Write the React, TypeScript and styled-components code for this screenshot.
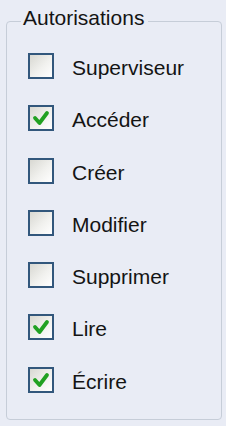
import React, { useState } from 'react'
import styled, { createGlobalStyle } from 'styled-components'

const GlobalStyle = createGlobalStyle`
	html,
	body {
		margin: 0;
		padding: 0;
		background: #e9ecf5;
		font-family: 'Liberation Sans', Arial, sans-serif;
	}
`

const permissions = [
	{ id: 'supervisor', label: 'Superviseur', checked: false },
	{ id: 'access', label: 'Accéder', checked: true },
	{ id: 'create', label: 'Créer', checked: false },
	{ id: 'edit', label: 'Modifier', checked: false },
	{ id: 'delete', label: 'Supprimer', checked: false },
	{ id: 'read', label: 'Lire', checked: true },
	{ id: 'write', label: 'Écrire', checked: true },
]

const App = () => {
	const [values, setValues] = useState(permissions)

	const toggle = (id: string) => {
		setValues((prev) =>
			prev.map((p) => (p.id === id ? { ...p, checked: !p.checked } : p)),
		)
	}

	return (
		<>
			<GlobalStyle />
			<GroupBox>
				<Legend>Autorisations</Legend>
				<List>
					{values.map(({ id, label, checked }) => (
						<Option key={id} onClick={() => toggle(id)}>
							<Box>
								{checked && (
									<svg width="22" height="22" viewBox="0 0 22 22">
										<polyline
											points="5,11 9.5,16 17,6"
											fill="none"
											stroke="#21a121"
											strokeWidth="3.8"
											strokeLinecap="round"
											strokeLinejoin="round"
										/>
									</svg>
								)}
							</Box>
							<Label>{label}</Label>
						</Option>
					))}
				</List>
			</GroupBox>
		</>
	)
}

export default App

const GroupBox = styled.fieldset`
	box-sizing: border-box;
	width: 216px;
	margin: 6px 0 0 6px;
	padding: 0 0 26px 0;
	border: 1px solid #c6cdd8;
	border-radius: 4px;
	min-width: 0;
`

const Legend = styled.legend`
	margin-left: 14px;
	padding: 0 4px 6px 2px;
	font-size: 21px;
	line-height: 24px;
	color: #141414;
`

const List = styled.div`
	display: flex;
	flex-direction: column;
	gap: 26.3px;
	padding: 17px 0 0 21px;
`

const Option = styled.label`
	display: flex;
	align-items: flex-start;
	gap: 18px;
	height: 26px;
	cursor: default;
	user-select: none;
`

const Box = styled.span`
	box-sizing: border-box;
	width: 26px;
	height: 26px;
	flex: none;
	display: flex;
	align-items: center;
	justify-content: center;
	border: 2px solid #32577c;
	background: linear-gradient(135deg, #d8d8d2 0%, #f1f1ee 55%, #ffffff 100%);
`

const Label = styled.span`
	padding-top: 2px;
	font-size: 21px;
	line-height: 26px;
	color: #141414;
	white-space: nowrap;
`
